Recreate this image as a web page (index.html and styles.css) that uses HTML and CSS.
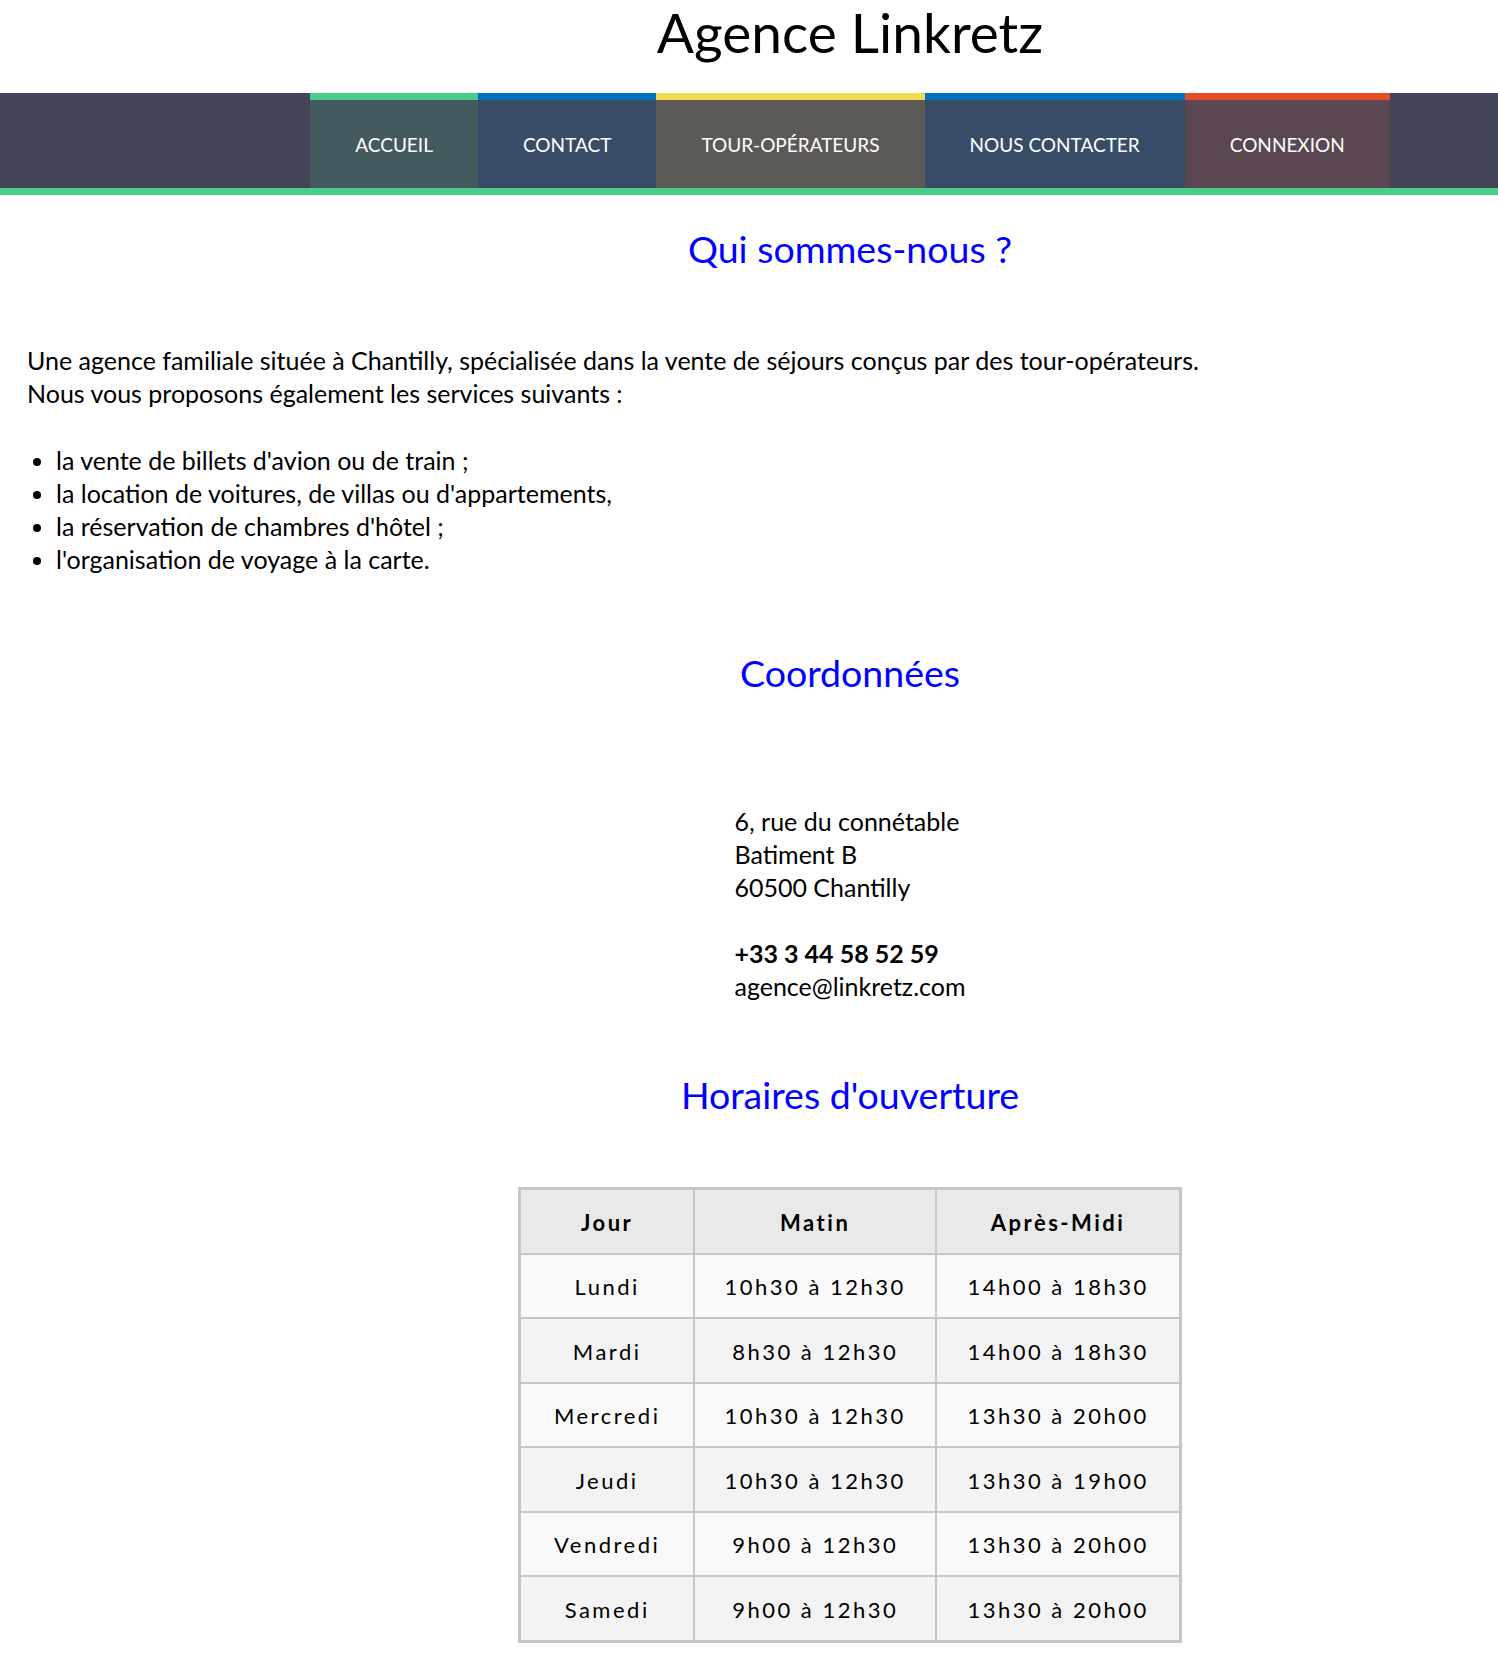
FILE: index.html
```html
<!DOCTYPE html>
<html lang="fr">
<head>
<meta charset="utf-8">
<title>Agence Linkretz</title>
<link rel="stylesheet" href="styles.css">
</head>
<body>
<div class="page">
  <header class="site-header">
    <h1 class="site-title">Agence Linkretz</h1>
  </header>
  <nav class="main-nav">
    <ul class="nav-list">
      <li class="nav-item nav-item--green"><a class="nav-link" href="#">ACCUEIL</a></li>
      <li class="nav-item nav-item--blue"><a class="nav-link" href="#">CONTACT</a></li>
      <li class="nav-item nav-item--yellow"><a class="nav-link" href="#">TOUR-OPÉRATEURS</a></li>
      <li class="nav-item nav-item--blue"><a class="nav-link" href="#">NOUS CONTACTER</a></li>
      <li class="nav-item nav-item--red"><a class="nav-link" href="#">CONNEXION</a></li>
    </ul>
  </nav>
  <main class="content">
    <section class="about">
      <h2 class="section-title section-title--about">Qui sommes-nous ?</h2>
      <p class="intro">Une agence familiale située à Chantilly, spécialisée dans la vente de séjours conçus par des tour-opérateurs.<br>Nous vous proposons également les services suivants :</p>
      <ul class="services">
        <li>la vente de billets d'avion ou de train ;</li>
        <li>la location de voitures, de villas ou d'appartements,</li>
        <li>la réservation de chambres d'hôtel ;</li>
        <li>l'organisation de voyage à la carte.</li>
      </ul>
    </section>
    <section class="contact">
      <h2 class="section-title section-title--contact">Coordonnées</h2>
      <div class="address-wrap">
        <address class="address">6, rue du connétable<br>Batiment B<br>60500 Chantilly<br><br><strong class="phone">+33 3 44 58 52 59</strong><br>agence@linkretz.com</address>
      </div>
    </section>
    <section class="hours">
      <h2 class="section-title section-title--hours">Horaires d'ouverture</h2>
      <table class="hours-table">
        <thead>
          <tr><th class="col-day">Jour</th><th class="col-am">Matin</th><th class="col-pm">Après-Midi</th></tr>
        </thead>
        <tbody>
          <tr><td>Lundi</td><td>10h30 à 12h30</td><td>14h00 à 18h30</td></tr>
          <tr><td>Mardi</td><td>8h30 à 12h30</td><td>14h00 à 18h30</td></tr>
          <tr><td>Mercredi</td><td>10h30 à 12h30</td><td>13h30 à 20h00</td></tr>
          <tr><td>Jeudi</td><td>10h30 à 12h30</td><td>13h30 à 19h00</td></tr>
          <tr><td>Vendredi</td><td>9h00 à 12h30</td><td>13h30 à 20h00</td></tr>
          <tr><td>Samedi</td><td>9h00 à 12h30</td><td>13h30 à 20h00</td></tr>
        </tbody>
      </table>
    </section>
  </main>
</div>
</body>
</html>
```
FILE: styles.css
```css
html, body {
  margin: 0;
  padding: 0;
  overflow-x: hidden;
  background: #ffffff;
}

body {
  font-family: Lato, "Open Sans", sans-serif;
  color: #000000;
}

.page {
  width: 1700px;
}

.site-header {
  text-align: center;
}

.site-title {
  margin: 0 0 29px;
  font-size: 55px;
  font-weight: 400;
  line-height: 64px;
}

.main-nav {
  background: #434556;
  border-bottom: 7px solid #48cc89;
}

.nav-list {
  display: flex;
  justify-content: center;
  margin: 0;
  padding: 0;
  list-style: none;
}

.nav-item {
  border-top: 7px solid transparent;
}

.nav-item--green { border-top-color: #48cc89; background: #445a5e; }
.nav-item--blue { border-top-color: #0071bc; background: #384c68; }
.nav-item--yellow { border-top-color: #f0da4f; background: #5c5a56; }
.nav-item--red { border-top-color: #e34e28; background: #5b4752; }

.nav-link {
  display: block;
  padding: 1px 45px 0;
  height: 87px;
  line-height: 88px;
  font-size: 19px;
  color: #ffffff;
  text-decoration: none;
}

.content {
  padding: 0 27px;
}

.section-title {
  margin: 0;
  text-align: center;
  color: #0000ff;
  font-size: 37.5px;
  font-weight: 400;
  line-height: 48px;
}

.section-title--about { margin-top: 30px; }
.section-title--contact { margin-top: 73px; }
.section-title--hours { margin-top: 68px; }

.intro {
  margin: 71px 0 0;
  font-size: 25px;
  line-height: 33px;
}

.services {
  margin: 34px 0 0;
  padding-left: 29px;
  font-size: 25px;
  line-height: 33px;
}

.address-wrap {
  margin-top: 108px;
  text-align: center;
}

.address {
  display: inline-block;
  text-align: left;
  font-style: normal;
  font-size: 25px;
  line-height: 33px;
}

.phone {
  font-weight: 700;
}

.hours-table {
  margin: 68px auto 0;
  width: 664px;
  border-collapse: collapse;
  border: 3px solid #c6c6c6;
  font-size: 22px;
  letter-spacing: 2.5px;
  text-align: center;
}

.hours-table th,
.hours-table td {
  border: 2px solid #c6c6c6;
  height: 60.5px;
  padding: 2px 0 0;
}

.hours-table th {
  background: #e9e9e9;
  font-weight: 700;
}

.hours-table tbody tr:nth-child(odd) td { background: #f9f9f9; }
.hours-table tbody tr:nth-child(even) td { background: #f3f3f3; }

.col-day { width: 174px; }
.col-am { width: 244px; }
.col-pm { width: 246px; }
```
